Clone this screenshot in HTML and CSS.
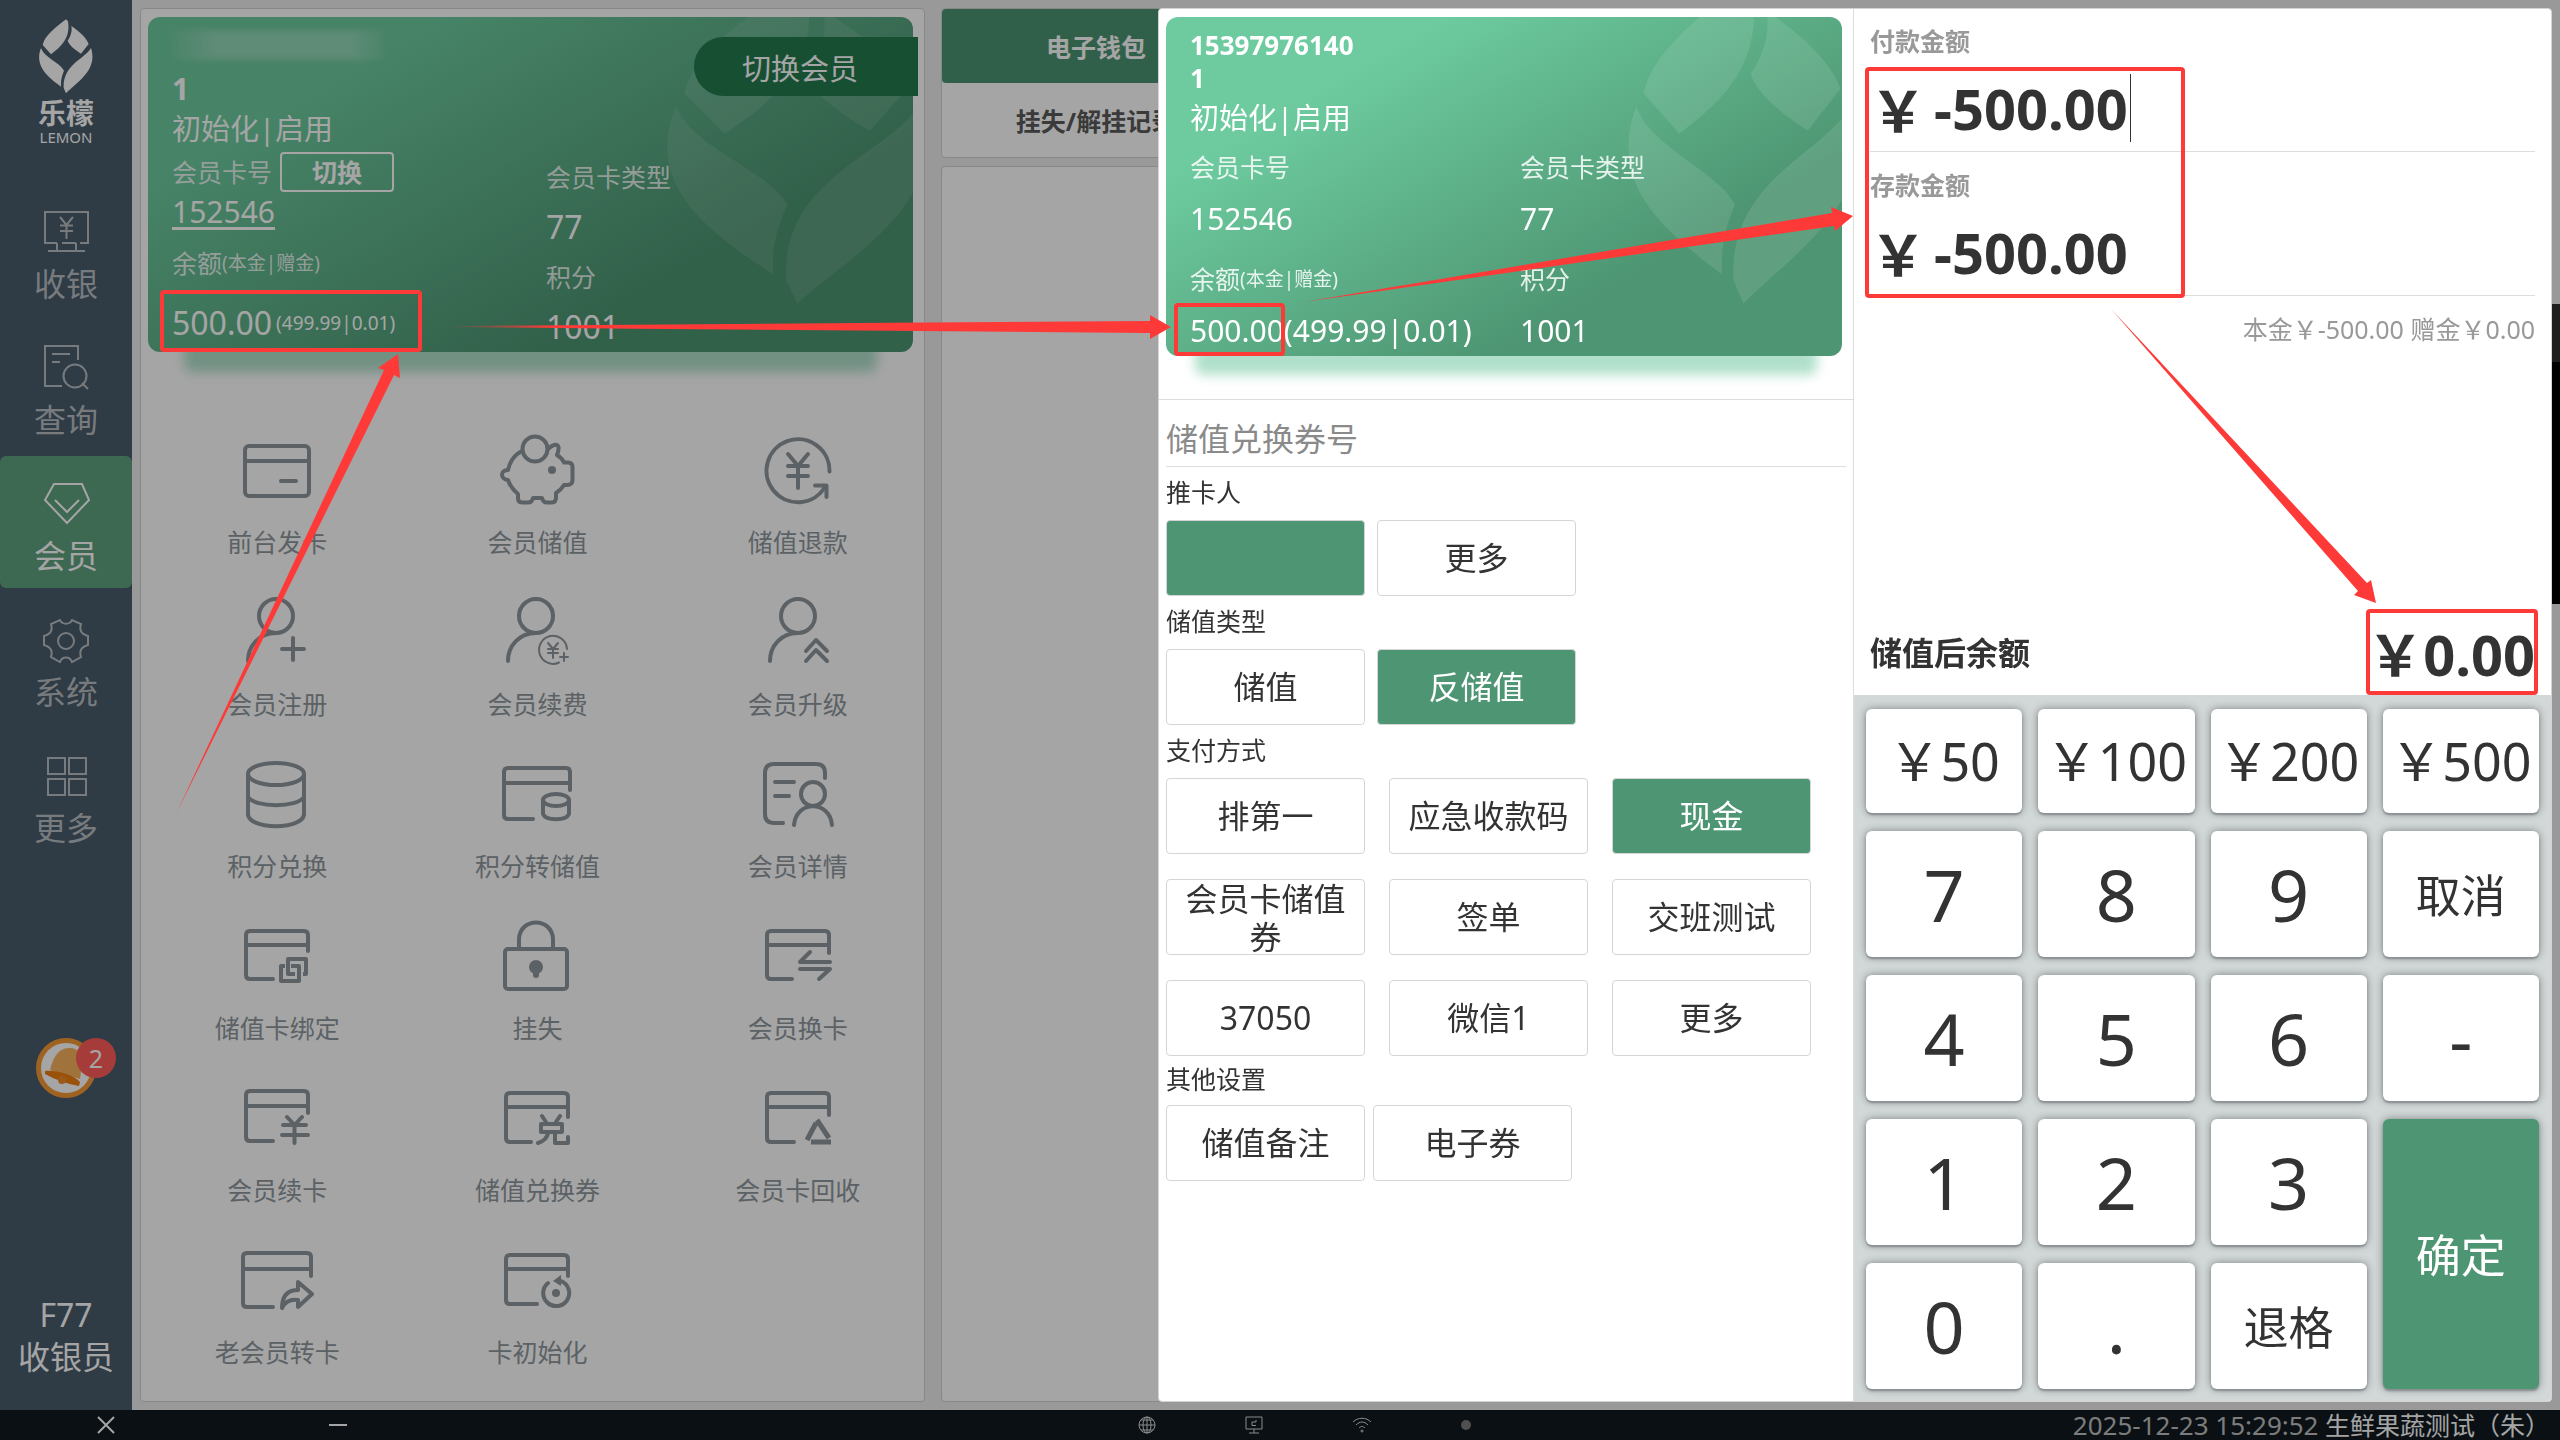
FILE: index.html
```html
<!DOCTYPE html>
<html lang="zh-CN">
<head>
  <meta charset="utf-8">
  <title>会员储值</title>
  <link rel="stylesheet" href="styles.css">
</head>
<body>
  <svg class="sprite" aria-hidden="true">
    <symbol id="leaf" viewBox="110 50 180 240" preserveAspectRatio="none">
      <path d="M200 60C172 82 136 108 130 137L155 165C186 142 214 116 206 66Z"/>
      <path d="M216 80C240 96 262 116 268 134L245 163C228 152 210 138 205 124C214 110 219 96 216 80Z"/>
      <path d="M125 146C135 175 182 190 194 214C187 230 184 244 185 262C150 236 103 202 125 146Z"/>
      <path d="M275 146C255 180 190 196 193 266L200 282C236 246 296 212 275 146Z"/>
    </symbol>
  </svg>

  <div class="app">
    <div class="workspace">
      <nav class="sidebar">
        <div class="brand">
          <svg class="brand-logo"><use href="#leaf"/></svg>
          <span class="brand-name">乐檬</span>
          <span class="brand-en">LEMON</span>
        </div>

        <div class="nav-list">
          <button class="nav-item">
            <svg class="nav-icon" viewBox="0 0 48 48"><path d="M15 35H3V4H46V35H38M20 35H34M15 35V43M34 35V43M6 43H43M18 9L24.500 17L31 9M18 17.500H31M18 23H31M24.500 17V31"/></svg>
            <span>收银</span>
          </button>
          <button class="nav-item">
            <svg class="nav-icon" viewBox="0 0 48 48"><path d="M20 42H3V2H36V16M10 10H28M10 18H18"/><circle cx="33" cy="32" r="11.500"/><path d="M40 39L46 45"/></svg>
            <span>查询</span>
          </button>
          <button class="nav-item active">
            <svg class="nav-icon" viewBox="0 0 48 48"><path d="M12 4H40L47 20L25 43L3 20ZM13 20L25 32L37 20"/></svg>
            <span>会员</span>
          </button>
          <button class="nav-item">
            <svg class="nav-icon" viewBox="0 0 48 48"><path d="M18 4C20 9 28 9 30 4L39 8C37 14 39 18 46 20V29C39 31 37 35 39 41L30 46C28 40 20 40 18 46L9 41C11 35 9 31 2 29V20C9 18 11 14 9 8Z"/><circle cx="24" cy="25" r="8"/></svg>
            <span>系统</span>
          </button>
          <button class="nav-item">
            <svg class="nav-icon" viewBox="0 0 48 48"><path d="M6 6H23V22H6ZM27 6H44V22H27ZM6 27H23V43H6ZM27 27H44V43H27Z"/></svg>
            <span>更多</span>
          </button>
        </div>

        <button class="bell" aria-label="消息">
          <svg viewBox="0 0 60 60" width="60" height="60">
            <circle cx="30" cy="30" r="27.500" fill="#fff" stroke="#f59a35" stroke-width="5"/>
            <path d="M14 32C18 16 24 9 36 10C46 12 47 22 44 41Z" fill="#f7b25f"/>
            <path d="M9 33C20 32 36 36 44 44L43 48C32 46 20 42 9 36Z" fill="#ef7d10"/>
            <circle cx="26" cy="42" r="4" fill="#f08a2c"/>
          </svg>
          <span class="bell-count">2</span>
        </button>

        <div class="cashier">
          <span>F77</span>
          <span>收银员</span>
        </div>
      </nav>

      <section class="panel member-panel">
        <div class="member-head">
          <div class="card">
            <svg class="watermark"><use href="#leaf"/></svg>
            <div class="masked-name"></div>
            <div class="card-name">1</div>
            <div class="card-status">初始化|启用</div>
            <div class="card-cols">
              <div class="card-col">
                <div class="card-row muted">会员卡号 <button class="switch-card">切换</button></div>
                <div class="card-row value"><a href="#">152546</a></div>
                <div class="card-row muted spaced-label">余额<small>(本金|赠金)</small></div>
                <div class="card-row value big spaced-value">500.00<small>(499.99|0.01)</small></div>
              </div>
              <div class="card-col tall">
                <div class="card-row muted">会员卡类型</div>
                <div class="card-row value big">77</div>
                <div class="card-row muted">积分</div>
                <div class="card-row value big">1001</div>
              </div>
            </div>
          </div>
          <button class="switch-member">切换会员</button>
        </div>

        <div class="menu">
          <button class="menu-item">
            <svg viewBox="0 0 80 80"><rect x="8" y="16" width="64" height="50" rx="4"/><path d="M8 31H72M44 51H59"/></svg>
            <span>前台发卡</span>
          </button>
          <button class="menu-item">
            <svg viewBox="0 0 80 80"><circle cx="38" cy="19" r="12.500"/><path d="M25 21C17 25 13 31 11 40C3 40 3 49 11 50C13 56 16 60 21 64V68Q21 72.500 25 72.500H31Q35 72.500 36 68H45Q46 72.500 50 72.500H55Q59 72.500 59 67V63Q64 60 67 55H70Q75.500 55 75.500 50V37Q75.500 32.500 71 32.500H67Q65 28 60 25Q62 20 61.500 17C60 13 55 15 51 19"/><circle class="fill" cx="55" cy="40" r="4"/></svg>
            <span>会员储值</span>
          </button>
          <button class="menu-item">
            <svg viewBox="0 0 80 80"><path d="M71.500 41.500A31.500 31.500 0 1 0 67 57M57 55.500H68.500V67M30 24L40 36L50 24M30 36H50M30 46H50M40 36V58"/></svg>
            <span>储值退款</span>
          </button>
          <button class="menu-item">
            <svg viewBox="0 0 80 80"><circle cx="39" cy="24" r="17"/><path d="M39 41C22 41 11 54 11 69M56 46V68M45 57H67"/></svg>
            <span>会员注册</span>
          </button>
          <button class="menu-item">
            <svg viewBox="0 0 80 80"><circle cx="39" cy="24" r="17"/><path d="M39 41C22 41 11 54 11 69"/><path class="thin" d="M70 57A14 14 0 1 0 62 70.500M67 61V69M63 65H71M51 51L56 57L61 51M51 57H61M51 61H61M56 57V66"/></svg>
            <span>会员续费</span>
          </button>
          <button class="menu-item">
            <svg viewBox="0 0 80 80"><circle cx="40" cy="24" r="17"/><path d="M40 41C23 41 12 54 12 69M48 59L58 48L69 59M48 69L58 58L69 69"/></svg>
            <span>会员升级</span>
          </button>
          <button class="menu-item">
            <svg viewBox="0 0 80 80"><ellipse cx="39" cy="20" rx="28" ry="11"/><path d="M11 20V61C14 76 64 76 67 61V20M11 43C18 54 60 54 67 43"/></svg>
            <span>积分兑换</span>
          </button>
          <button class="menu-item">
            <svg viewBox="0 0 80 80"><path d="M73 36V18Q73 14 69 14H11Q7 14 7 18V61Q7 65 11 65H36M7 29H73"/><ellipse cx="59" cy="46" rx="13" ry="6"/><path d="M46 46V60C49 67 69 67 72 60V46"/></svg>
            <span>积分转储值</span>
          </button>
          <button class="menu-item">
            <svg viewBox="0 0 80 80"><path d="M67 24V19Q67 10 58 10H16Q7 10 7 19V60Q7 69 16 69H25M17 28H36M17 42H31"/><circle cx="55" cy="40" r="12"/><path d="M36 71C38 46 72 46 74 71"/></svg>
            <span>会员详情</span>
          </button>
          <button class="menu-item">
            <svg viewBox="0 0 80 80"><path d="M71 35V19Q71 15 67 15H13Q9 15 9 19V59Q9 63 13 63H36M9 29H71"/><path class="square" d="M54 50H62V65H44V50H48M58 58H51V43H69V58H66"/></svg>
            <span>储值卡绑定</span>
          </button>
          <button class="menu-item">
            <svg viewBox="0 0 80 80"><rect x="8" y="33" width="62" height="40" rx="3"/><path d="M22 32V23C23 1 55 1 56 23V32"/><circle class="fill" cx="39" cy="51" r="7"/><path d="M39 51V59" stroke-width="6"/></svg>
            <span>挂失</span>
          </button>
          <button class="menu-item">
            <svg viewBox="0 0 80 80"><path d="M71 37V19Q71 15 67 15H13Q9 15 9 19V59Q9 63 13 63H34M9 29H71M72 46H42L52 36M42 53H72L61 63"/></svg>
            <span>会员换卡</span>
          </button>
          <button class="menu-item">
            <svg viewBox="0 0 80 80"><path d="M71 35V17Q71 13 67 13H13Q9 13 9 17V59Q9 63 13 63H36M9 28H71M50 39L57.500 47L65 39M46 47H69M45 57H71M57.500 47V65"/></svg>
            <span>会员续卡</span>
          </button>
          <button class="menu-item">
            <svg viewBox="0 0 80 80"><path d="M71 39V19Q71 15 67 15H13Q9 15 9 19V60Q9 64 13 64H34M9 29H71M45 38L49 44M63 38L59 44M44 46H65V54H44ZM51 55Q50 62 41 65M58 55V65H71V59"/></svg>
            <span>储值兑换券</span>
          </button>
          <button class="menu-item">
            <svg viewBox="0 0 80 80"><path d="M71 37V19Q71 15 67 15H13Q9 15 9 19V60Q9 64 13 64H36M9 29H71"/><path class="square" d="M49 62L58 45M59 42L71 60M53 64H73" stroke-width="5"/></svg>
            <span>会员卡回收</span>
          </button>
          <button class="menu-item">
            <svg viewBox="0 0 80 80"><path d="M74 36V17Q74 13 70 13H10Q6 13 6 17V63Q6 67 10 67H36M6 29H74M45 68C45 54 52 50 61 50V42L75 54L61 67V60C53 59 48 62 45 68Z"/></svg>
            <span>老会员转卡</span>
          </button>
          <button class="menu-item">
            <svg viewBox="0 0 80 80"><path d="M71 36V19Q71 15 67 15H13Q9 15 9 19V60Q9 64 13 64H40M9 29H71M51 43A13 13 0 1 0 64 41"/><path class="fill" d="M56 41L64 35V46Z"/><circle class="fill" cx="59" cy="53" r="4"/></svg>
            <span>卡初始化</span>
          </button>
        </div>
      </section>

      <div class="records">
        <div class="panel record-tabs">
          <button class="record-tab active">电子钱包</button>
          <button class="record-tab">挂失/解挂记录</button>
        </div>
        <div class="panel record-body"></div>
      </div>
    </div>

    <footer class="statusbar">
      <div class="window-actions">
        <button aria-label="关闭"><svg width="18" height="18" viewBox="0 0 18 18"><path d="M1 1L17 17M17 1L1 17"/></svg></button>
        <button aria-label="最小化"><svg width="18" height="18" viewBox="0 0 18 18"><path d="M0 9H18"/></svg></button>
      </div>
      <div class="indicators">
        <svg width="18" height="18" viewBox="0 0 18 18"><circle cx="9" cy="9" r="8"/><ellipse cx="9" cy="9" rx="4" ry="8"/><path d="M9 1V17M1 9H17M3 4H15M3 14H15"/></svg>
        <svg width="18" height="18" viewBox="0 0 18 18"><path d="M1 1H17V13H1ZM9 13V17M4 17H14M11 4V6H7V9.500H11"/></svg>
        <svg width="20" height="18" viewBox="0 0 20 18"><path d="M1 6C6 1 14 1 19 6M4 9C8 5 12 5 16 9M7 12C9 10 11 10 13 12"/><circle cx="10" cy="15" r="1"/></svg>
        <i class="dot"></i>
      </div>
      <div class="status-text"><time>2025-12-23 15:29:52</time> <span>生鲜果蔬测试（朱）</span></div>
    </footer>
  </div>

  <div class="mask"></div>
  <div class="side-widget"></div>

  <main class="dialog">
    <section class="recharge">
      <div class="card-wrap">
        <div class="card dialog-card">
          <svg class="watermark"><use href="#leaf"/></svg>
          <div class="card-name">15397976140</div>
          <div class="card-name">1</div>
          <div class="card-status">初始化|启用</div>
          <div class="card-cols">
            <div class="card-col">
              <div class="card-row muted">会员卡号</div>
              <div class="card-row value">152546</div>
              <div class="card-row muted spaced">余额<small>(本金|赠金)</small></div>
              <div class="card-row value">500.00(499.99|0.01)</div>
            </div>
            <div class="card-col">
              <div class="card-row muted">会员卡类型</div>
              <div class="card-row value">77</div>
              <div class="card-row muted spaced">积分</div>
              <div class="card-row value">1001</div>
            </div>
          </div>
        </div>
      </div>

      <div class="form">
        <input class="coupon" type="text" placeholder="储值兑换券号" aria-label="储值兑换券号">

        <h3>推卡人</h3>
        <div class="options">
          <button class="option selected" aria-label="推卡人"></button>
          <button class="option">更多</button>
        </div>

        <h3>储值类型</h3>
        <div class="options">
          <button class="option">储值</button>
          <button class="option selected">反储值</button>
        </div>

        <h3>支付方式</h3>
        <div class="options pay-options">
          <button class="option">排第一</button>
          <button class="option">应急收款码</button>
          <button class="option selected">现金</button>
          <button class="option">会员卡储值券</button>
          <button class="option">签单</button>
          <button class="option">交班测试</button>
          <button class="option">37050</button>
          <button class="option">微信1</button>
          <button class="option">更多</button>
        </div>

        <h3 class="compact">其他设置</h3>
        <div class="options other-options">
          <button class="option">储值备注</button>
          <button class="option">电子券</button>
        </div>
      </div>
    </section>

    <section class="checkout">
      <div class="amounts">
        <label for="pay">付款金额</label>
        <div class="amount">
          <span>￥</span><input id="pay" type="text" value="-500.00"><i class="caret"></i>
        </div>
        <label for="deposit">存款金额</label>
        <div class="amount">
          <span>￥</span><input id="deposit" type="text" value="-500.00">
        </div>
        <p class="split">本金￥-500.00 赠金￥0.00</p>
        <div class="after">
          <span class="after-label">储值后余额</span>
          <strong>￥0.00</strong>
        </div>
      </div>

      <div class="keypad">
        <button class="key money">￥50</button>
        <button class="key money">￥100</button>
        <button class="key money">￥200</button>
        <button class="key money">￥500</button>
        <button class="key">7</button>
        <button class="key">8</button>
        <button class="key">9</button>
        <button class="key word">取消</button>
        <button class="key">4</button>
        <button class="key">5</button>
        <button class="key">6</button>
        <button class="key">-</button>
        <button class="key">1</button>
        <button class="key">2</button>
        <button class="key">3</button>
        <button class="key word confirm">确定</button>
        <button class="key">0</button>
        <button class="key">.</button>
        <button class="key word">退格</button>
      </div>
    </section>
  </main>

  <svg class="notes" viewBox="0 0 2560 1440" preserveAspectRatio="none" aria-hidden="true">
    <defs>
      <linearGradient id="fade"><stop offset="0" stop-color="#fe3a39" stop-opacity="0"/><stop offset="0.150" stop-color="#fe3a39"/></linearGradient>
    </defs>
    <rect x="162" y="292" width="258" height="58" rx="2"/>
    <rect x="1176" y="305" width="107" height="49" rx="2"/>
    <rect x="1867" y="69" width="316" height="227" rx="2"/>
    <rect x="2368" y="611" width="168" height="82" rx="2"/>
    <path d="M176 814L384 370L378 368L398 354L400 378L394 375Z"/>
    <path d="M445 326L1150 321V315L1171 327L1150 339V333L445 327Z" fill="url(#fade)"/>
    <path d="M1304 302L1832 213L1831 207L1853 216L1835 231L1834 226Z"/>
    <path d="M2111 309L2367 583L2371 580L2376 603L2354 595L2358 591Z"/>
  </svg>
</body>
</html>
```

FILE: styles.css
```css
* {
  box-sizing: border-box;
}

body {
  margin: 0;
  height: 100vh;
  overflow: hidden;
  font-family: "Noto Sans", "Noto Sans CJK SC", sans-serif;
  font-size: 25px;
  color: #333;
  background: #ececec;
}

button,
input {
  font-family: inherit;
  color: inherit;
  border: none;
  padding: 0;
  background: none;
}

button {
  cursor: pointer;
}

.sprite {
  position: absolute;
  width: 0;
  height: 0;
}

.app {
  display: flex;
  flex-direction: column;
  height: 100vh;
}

.workspace {
  flex: 1;
  display: flex;
  min-height: 0;
}

/* Sidebar */
.sidebar {
  width: 132px;
  display: flex;
  flex-direction: column;
  align-items: center;
  background: #495b6b;
  color: #fff;
}

.brand {
  display: flex;
  flex-direction: column;
  align-items: center;
  height: 184px;
  padding-top: 16px;
}

.brand-logo {
  width: 60px;
  height: 80px;
  fill: #fff;
}

.brand-name {
  font-size: 28px;
  font-weight: 700;
  line-height: 34px;
}

.brand-en {
  font-size: 15px;
  line-height: 15px;
}

.nav-list {
  width: 100%;
  display: flex;
  flex-direction: column;
  gap: 4px;
}

.nav-item {
  height: 132px;
  padding-top: 12px;
  display: flex;
  flex-direction: column;
  align-items: center;
  justify-content: center;
  gap: 8px;
  border-radius: 6px;
  font-size: 32px;
  line-height: 40px;
  color: #b9bfc3;
}

.nav-item.active {
  background: #5fa17e;
  color: #fff;
}

.nav-icon {
  width: 48px;
  height: 48px;
  fill: none;
  stroke: currentColor;
  stroke-width: 2;
}

.bell {
  position: relative;
  width: 60px;
  height: 60px;
  margin-top: 178px;
}

.bell-count {
  position: absolute;
  top: 0;
  right: -20px;
  width: 40px;
  height: 40px;
  border-radius: 50%;
  background: #ff5e5a;
  color: #fff;
  font-size: 25px;
  line-height: 40px;
}

.cashier {
  display: flex;
  flex-direction: column;
  align-items: center;
  margin-top: auto;
  padding-bottom: 32px;
  font-size: 32px;
  line-height: 42px;
}

/* Panels */
.panel {
  background: #fff;
  border: 1px solid #d3d3d3;
  border-radius: 4px;
}

.member-panel {
  width: 785px;
  margin: 8px;
  padding-top: 8px;
}

.member-head {
  position: relative;
  margin: 0 11px 0 7px;
}

.card {
  position: relative;
  overflow: hidden;
  height: 335px;
  padding: 10px 24px 0;
  border-radius: 12px;
  background: linear-gradient(150deg, #6dcb9f 22%, #4e9673 72%);
  color: #fff;
}

.member-head::before,
.card-wrap::before {
  content: "";
  position: absolute;
  left: 36px;
  right: 36px;
  bottom: -20px;
  height: 40px;
  border-radius: 8px;
  background: #b0e0cb;
  filter: blur(6px);
}

.watermark {
  position: absolute;
  top: -50px;
  right: -30px;
  width: 38%;
  height: 348px;
  fill: rgba(255, 255, 255, 0.1);
}

.masked-name {
  width: 212px;
  height: 30px;
  margin: 3px 0 11px;
  background: linear-gradient(90deg, rgba(255, 255, 255, 0.05), rgba(255, 255, 255, 0.25) 20%, rgba(255, 255, 255, 0.25) 85%, rgba(255, 255, 255, 0.05));
  filter: blur(3px);
}

.card-name {
  font-size: 30px;
  font-weight: 700;
  line-height: 35px;
}

.card-status {
  font-size: 29px;
  line-height: 46px;
}

.card-cols {
  display: flex;
}

.card-col {
  flex: none;
  width: 374px;
}

.card-row {
  height: 40px;
  line-height: 40px;
  display: flex;
  align-items: center;
  white-space: nowrap;
}

.card-row.muted {
  color: rgba(255, 255, 255, 0.85);
}

.card-row.value {
  font-size: 30px;
}

.card-row.big {
  font-size: 32px;
}

.card-row a {
  color: inherit;
  text-underline-offset: 4px;
}

.card-row small {
  font-size: 19px;
}

.card-row.big small {
  margin-left: 4px;
}

.tall .card-row {
  height: 50px;
}

.spaced-label {
  margin-top: 11px;
}

.spaced-value {
  margin-top: 20px;
}

.switch-card {
  width: 114px;
  height: 40px;
  margin-left: 8px;
  border: 2px solid #fff;
  border-radius: 4px;
  font-size: 25px;
  font-weight: 700;
  line-height: 34px;
  color: #fff;
}

.switch-member {
  position: absolute;
  top: 20px;
  right: -5px;
  width: 224px;
  height: 59px;
  padding-right: 12px;
  border-radius: 30px 0 0 30px;
  background: #247a50;
  color: #fff;
  font-size: 29px;
}

/* Function menu */
.menu {
  display: grid;
  grid-template-columns: repeat(3, 1fr);
  grid-auto-rows: 162px;
  margin: 62px -4px 0 6px;
}

.menu-item {
  display: flex;
  flex-direction: column;
  align-items: center;
  justify-content: center;
  gap: 14px;
  font-size: 25px;
  line-height: 36px;
  color: #8e979d;
}

.menu-item svg {
  width: 80px;
  height: 80px;
  fill: none;
  stroke: currentColor;
  stroke-width: 4;
  stroke-linecap: round;
  stroke-linejoin: round;
}

.menu-item .fill {
  fill: currentColor;
  stroke: none;
}

.menu-item .thin {
  stroke-width: 2;
}

.menu-item .square {
  stroke-linecap: butt;
}

/* Records */
.records {
  flex: 1;
  display: flex;
  flex-direction: column;
  gap: 8px;
  margin: 8px;
}

.record-tabs {
  display: flex;
  flex-direction: column;
  height: 150px;
}

.record-tab {
  width: 308px;
  height: 74px;
  font-size: 25px;
  font-weight: 700;
  color: #5a5a5a;
}

.record-tab.active {
  border-radius: 4px;
  background: #4c9573;
  color: #fff;
}

.record-body {
  flex: 1;
}

/* Status bar */
.statusbar {
  display: grid;
  grid-template-columns: 1fr 340px 1fr;
  align-items: center;
  height: 30px;
  background: #101a1f;
  color: #fff;
}

.statusbar svg {
  display: block;
  fill: none;
  stroke: currentColor;
  stroke-width: 2;
}

.window-actions {
  display: flex;
  gap: 214px;
  padding-left: 97px;
}

.indicators {
  display: flex;
  align-items: center;
  justify-content: space-between;
  width: 361px;
  padding-left: 28px;
  color: #d8d8d8;
}

.statusbar .indicators svg {
  flex: none;
  stroke-width: 1;
}

.dot {
  flex: none;
  width: 10px;
  height: 10px;
  border-radius: 50%;
  background: #7c7c7c;
}

.status-text {
  justify-self: end;
  padding-right: 10px;
  font-size: 25px;
  line-height: 30px;
  white-space: nowrap;
}

.status-text time {
  font-size: 26px;
  color: #c0c0c0;
}

.mask {
  position: fixed;
  inset: 0;
  background: rgba(0, 0, 0, 0.353);
}

.side-widget {
  position: fixed;
  top: 304px;
  right: 0;
  width: 8px;
  height: 300px;
  border-top: 58px solid #1e1e1e;
  background: #000;
}

/* Recharge dialog */
.dialog {
  position: fixed;
  top: 8px;
  right: 8px;
  bottom: 38px;
  left: 1158px;
  display: flex;
  overflow: hidden;
  border: 1px solid #d3d3d3;
  border-radius: 4px;
  background: #fff;
}

.recharge {
  flex: 1;
  min-width: 0;
  border-right: 1px solid #ddd;
}

.card-wrap {
  position: relative;
  height: 391px;
  padding: 8px 11px 0 7px;
  border-bottom: 1px solid #ddd;
}

.card-wrap::before {
  bottom: 24px;
}

.dialog-card {
  height: 339px;
  padding-top: 12px;
}

.dialog-card .card-name {
  font-size: 26px;
  line-height: 33px;
}

.dialog-card .card-col {
  width: 330px;
}

.dialog-card .card-row {
  height: 52px;
}

.dialog-card .spaced {
  margin-top: 8px;
}

.form {
  padding: 0 7px;
}

.coupon {
  display: block;
  width: 100%;
  height: 67px;
  padding-top: 10px;
  border-bottom: 1px solid #ddd;
  font-size: 32px;
  outline: none;
}

.coupon::placeholder {
  color: #8a8a8a;
  opacity: 1;
}

.form h3 {
  margin: 0;
  padding-bottom: 2px;
  font-size: 25px;
  font-weight: 400;
  line-height: 51px;
}

.form h3.compact {
  line-height: 47px;
}

.options {
  display: flex;
  gap: 12px;
}

.pay-options {
  flex-wrap: wrap;
  gap: 25px 24px;
}

.other-options {
  gap: 8px;
}

.option {
  width: 199px;
  height: 76px;
  padding: 0 16px;
  border: 1px solid #d5d5d5;
  border-radius: 4px;
  font-size: 32px;
  line-height: 38px;
}

.option.selected {
  background: #4e9673;
  color: #fff;
}

/* Checkout */
.checkout {
  flex: none;
  width: 697px;
  display: flex;
  flex-direction: column;
}

.amounts {
  flex: 1;
  display: flex;
  flex-direction: column;
  padding: 14px 16px 0;
}

.amounts label {
  font-weight: 700;
  line-height: 36px;
  color: #999;
}

.amount {
  display: flex;
  align-items: center;
  height: 93px;
  padding-top: 5px;
  margin-bottom: 15px;
  border-bottom: 1px solid #ddd;
  font-size: 56px;
  font-weight: 700;
}

.amount input {
  width: 196px;
  margin-left: 8px;
  font-size: 56px;
  font-weight: 700;
  outline: none;
}

.caret {
  width: 1px;
  height: 68px;
  background: #333;
}

.split {
  margin: 0;
  line-height: 36px;
  text-align: right;
  color: #999;
}

.after {
  display: flex;
  align-items: center;
  justify-content: space-between;
  height: 78px;
  margin-top: auto;
  margin-bottom: 5px;
  font-weight: 700;
}

.after-label {
  font-size: 32px;
}

.after strong {
  font-size: 56px;
  font-weight: 700;
}

.keypad {
  display: grid;
  grid-template-columns: repeat(4, 1fr);
  grid-template-rows: 104px repeat(4, 126px);
  gap: 18px 16px;
  padding: 14px 12px 12px;
  background: #d1d8d7;
}

.key {
  border-radius: 6px;
  background: #fff;
  box-shadow: 0 2px 2px #8a9092, 0 0 8px rgba(0, 0, 0, 0.4);
  font-size: 72px;
  line-height: 80px;
}

.key.money {
  font-size: 52px;
  white-space: nowrap;
}

.key.word {
  padding-top: 4px;
  font-size: 45px;
}

.key.confirm {
  grid-row: span 2;
  background: #4e9673;
  color: #fff;
}

/* Marks drawn over the whole screen */
.notes {
  position: fixed;
  inset: 0;
  width: 100%;
  height: 100%;
  pointer-events: none;
  fill: #fe3a39;
}

.notes rect {
  fill: none;
  stroke: #fe3a39;
  stroke-width: 4;
}
```
